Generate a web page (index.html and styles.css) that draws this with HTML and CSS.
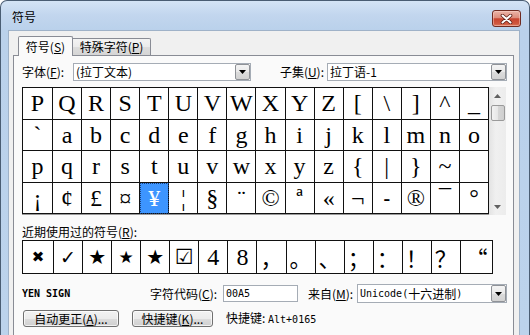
FILE: index.html
```html
<!DOCTYPE html>
<html lang="zh-CN">
<head>
<meta charset="utf-8">
<title>符号</title>
<link rel="stylesheet" href="styles.css">
</head>
<body>
<div class="window">
  <div class="titlebar">
    <span class="title">符号</span>
    <div class="close">
      <svg width="13" height="10" viewBox="0 0 13 10">
        <path d="M2.5 1.5 L10.5 8.5 M10.5 1.5 L2.5 8.5" stroke="#5a1d16" stroke-width="3.6" stroke-linecap="round"/>
        <path d="M2.5 1.5 L10.5 8.5 M10.5 1.5 L2.5 8.5" stroke="#ffffff" stroke-width="2" stroke-linecap="round"/>
      </svg>
    </div>
  </div>
  <div class="client">
    <div class="tabs">
      <div class="tab tab-active">符号(<u>S</u>)</div>
      <div class="tab tab-inactive">特殊字符(<u>P</u>)</div>
    </div>
    <div class="panel">
      <div class="row row-font">
        <span class="lbl lbl-font">字体(<u>F</u>):</span>
        <div class="combo combo-font"><span class="combo-text">(拉丁文本)</span><span class="drop"><svg width="7" height="4" viewBox="0 0 7 4"><polygon points="0,0 7,0 3.5,4" fill="#000"/></svg></span></div>
        <span class="lbl lbl-subset">子集(<u>U</u>):</span>
        <div class="combo combo-subset"><span class="combo-text">拉丁语-1</span><span class="drop"><svg width="7" height="4" viewBox="0 0 7 4"><polygon points="0,0 7,0 3.5,4" fill="#000"/></svg></span></div>
      </div>

      <div class="charbox">
        <div class="chargrid">
          <div class="cell">P</div><div class="cell">Q</div><div class="cell">R</div><div class="cell">S</div>
          <div class="cell">T</div><div class="cell">U</div><div class="cell">V</div><div class="cell">W</div>
          <div class="cell">X</div><div class="cell">Y</div><div class="cell">Z</div><div class="cell">[</div>
          <div class="cell">\</div><div class="cell">]</div><div class="cell">^</div><div class="cell">_</div>

          <div class="cell">`</div><div class="cell">a</div><div class="cell">b</div><div class="cell">c</div>
          <div class="cell">d</div><div class="cell">e</div><div class="cell">f</div><div class="cell">g</div>
          <div class="cell">h</div><div class="cell">i</div><div class="cell">j</div><div class="cell">k</div>
          <div class="cell">l</div><div class="cell">m</div><div class="cell">n</div><div class="cell">o</div>

          <div class="cell">p</div><div class="cell">q</div><div class="cell">r</div><div class="cell">s</div>
          <div class="cell">t</div><div class="cell">u</div><div class="cell">v</div><div class="cell">w</div>
          <div class="cell">x</div><div class="cell">y</div><div class="cell">z</div><div class="cell">{</div>
          <div class="cell">|</div><div class="cell">}</div><div class="cell">~</div><div class="cell"></div>

          <div class="cell">¡</div><div class="cell">¢</div><div class="cell">£</div><div class="cell">¤</div>
          <div class="cell cell-selected">¥</div><div class="cell">¦</div><div class="cell">§</div><div class="cell">¨</div>
          <div class="cell">©</div><div class="cell">ª</div><div class="cell">«</div><div class="cell">¬</div>
          <div class="cell cell-shy">-</div><div class="cell">®</div><div class="cell">¯</div><div class="cell">°</div>
        </div>
        <div class="scrollbar">
          <div class="sb-btn"><svg width="7" height="4" viewBox="0 0 7 4"><polygon points="0,4 7,4 3.5,0" fill="#606060"/></svg></div>
          <div class="sb-thumb"></div>
          <div class="sb-track"></div>
          <div class="sb-btn"><svg width="7" height="4" viewBox="0 0 7 4"><polygon points="0,0 7,0 3.5,4" fill="#606060"/></svg></div>
        </div>
      </div>

      <div class="recent-label">近期使用过的符号(<u>R</u>):</div>
      <div class="recent">
        <div class="rcell r-x">✖</div>
        <div class="rcell r-check">✓</div>
        <div class="rcell r-star">★</div>
        <div class="rcell r-star2">★</div>
        <div class="rcell r-star">★</div>
        <div class="rcell r-box">☑</div>
        <div class="rcell r-serif">4</div>
        <div class="rcell r-serif">8</div>
        <div class="rcell r-cjk">，</div>
        <div class="rcell r-cjk">。</div>
        <div class="rcell r-cjk">、</div>
        <div class="rcell r-cjk">；</div>
        <div class="rcell r-cjk">：</div>
        <div class="rcell r-cjk">！</div>
        <div class="rcell r-cjk">？</div>
        <div class="rcell r-cjk">“</div>
      </div>

      <div class="row row-code">
        <span class="charname mono">YEN SIGN</span>
        <span class="lbl lbl-code">字符代码(<u>C</u>):</span>
        <div class="input"><span class="mono">00A5</span></div>
        <span class="lbl lbl-from">来自(<u>M</u>):</span>
        <div class="combo combo-from"><span class="combo-text"><span class="mono">Unicode(</span>十六进制<span class="mono">)</span></span><span class="drop"><svg width="7" height="4" viewBox="0 0 7 4"><polygon points="0,0 7,0 3.5,4" fill="#000"/></svg></span></div>
      </div>

      <div class="row row-buttons">
        <div class="btn btn-auto">自动更正(<u>A</u>)...</div>
        <div class="btn btn-key">快捷键(<u>K</u>)...</div>
        <span class="shortcut">快捷键: <span class="mono">Alt+0165</span></span>
      </div>
    </div>
  </div>
</div>
</body>
</html>
```

FILE: styles.css
```css
* { box-sizing: border-box; }

html, body {
  margin: 0;
  padding: 0;
}

body {
  width: 530px;
  height: 335px;
  overflow: hidden;
  background: #ffffff;
  font-family: "Noto Sans CJK SC", "DejaVu Sans", sans-serif;
  font-size: 12px;
  color: #000;
}

u {
  text-decoration: underline;
  text-underline-offset: 1px;
}

.mono {
  font-family: "DejaVu Sans Mono", "Liberation Mono", monospace;
  font-size: 10px;
}

/* ---------- window frame ---------- */
.window {
  width: 530px;
  height: 335px;
  border: 1px solid #4a5d73;
  border-bottom: 0;
  border-radius: 7px 7px 0 0;
  background: linear-gradient(#d4e4f5 0px, #c2d6ee 14px, #bad1eb 29px, #bcd3ec 100%);
  display: flex;
  flex-direction: column;
  overflow: hidden;
}

.titlebar {
  height: 29px;
  flex: none;
  display: flex;
  align-items: flex-start;
}

.title {
  margin: 9px 0 0 11px;
  line-height: 14px;
  font-size: 12px;
  color: #000;
}

.close {
  margin: 9px 8px 0 auto;
  width: 29px;
  height: 17px;
  border: 1px solid #6f2b22;
  border-radius: 3px;
  background: linear-gradient(#eab4a8 0%, #de8d7c 45%, #c8442f 52%, #cf5840 85%, #dc7a5e 100%);
  box-shadow: inset 0 0 0 1px rgba(255, 220, 210, 0.45);
  display: flex;
  align-items: center;
  justify-content: center;
}

.close svg { display: block; }

/* ---------- client ---------- */
.client {
  flex: 1;
  margin: 0 9px 0 7px;
  border: 1px solid #9fb2c8;
  border-bottom: 0;
  background: #f0f0f0;
  display: flex;
  flex-direction: column;
  min-height: 0;
}

.tabs {
  flex: none;
  height: 24px;
  padding-left: 9px;
  display: flex;
  align-items: flex-end;
}

.tab {
  border: 1px solid #898c95;
  border-bottom: 0;
  display: flex;
  align-items: center;
  justify-content: center;
  line-height: 14px;
  white-space: nowrap;
}

.tab-active {
  width: 55px;
  height: 20px;
  margin-bottom: -1px;
  background: #fafafa;
  position: relative;
  z-index: 1;
  border-radius: 2px 2px 0 0;
}

.tab-inactive {
  width: 78px;
  height: 17px;
  border-left: 0;
  background: linear-gradient(#f3f3f3 0%, #ebebeb 50%, #dddddd 51%, #d5d5d5 100%);
  border-radius: 0 2px 0 0;
}

.panel {
  flex: 1;
  margin: 0 5px 0 4px;
  border: 1px solid #898c95;
  border-bottom: 0;
  background: #fafafa;
  padding: 7px 6px 0 8px;
  display: flex;
  flex-direction: column;
}

.row {
  display: flex;
  align-items: center;
  flex: none;
}

.lbl {
  line-height: 14px;
  white-space: nowrap;
}

/* ---------- font row ---------- */
.row-font { height: 18px; }

.lbl-font { width: 51px; }

.lbl-subset {
  flex: 1;
  text-align: right;
  padding-right: 3px;
}

.combo {
  height: 100%;
  border: 1px solid #a5acb5;
  background: #fff;
  display: flex;
  align-items: stretch;
}

.combo-text {
  padding-left: 2px;
  line-height: 14px;
  display: flex;
  align-items: center;
  white-space: nowrap;
}

.combo-font { width: 178px; }
.combo-subset { width: 180px; }

.drop {
  width: 15px;
  margin-left: auto;
  border: 1px solid #8f9297;
  border-radius: 2px;
  background: linear-gradient(#f4f4f4 0%, #e9e9e9 50%, #dcdcdc 51%, #d2d2d2 100%);
  display: flex;
  align-items: center;
  justify-content: center;
}

.drop svg { display: block; }

/* ---------- character grid ---------- */
.charbox {
  margin-top: 6px;
  height: 128px;
  display: flex;
  flex: none;
}

.chargrid {
  width: 467px;
  height: 127px;
  border-top: 1px solid #111;
  border-left: 1px solid #111;
  display: grid;
  grid-template-columns: 30px repeat(15, 1fr);
  grid-template-rows: repeat(4, 1fr);
  background: #fff;
  box-shadow: 0 1px 0 #9a9a9a;
}

.cell {
  border-right: 1px solid #111;
  border-bottom: 1px solid #111;
  display: flex;
  align-items: center;
  justify-content: center;
  font-family: "Liberation Serif", "DejaVu Serif", serif;
  font-size: 24px;
  line-height: 1;
  background: #fff;
  color: #000;
}

.cell-selected {
  background: #3d95ff;
  color: #fff;
  outline: 1px dotted #163e7a;
  outline-offset: -1px;
}

.cell-shy {
  font-weight: bold;
  font-size: 20px;
}

.scrollbar {
  width: 17px;
  height: 128px;
  background: linear-gradient(90deg, #e3e3e3, #f0f0f0 40%, #ececec);
  display: flex;
  flex-direction: column;
}

.sb-btn {
  height: 17px;
  display: flex;
  align-items: center;
  justify-content: center;
}

.sb-btn svg { display: block; }

.sb-thumb {
  height: 16px;
  margin: 1px 1px 0 2px;
  border: 1px solid #9a9a9a;
  border-radius: 2px;
  background: linear-gradient(90deg, #f2f2f2 0%, #e6e6e6 50%, #d6d6d6 51%, #cfcfcf 100%);
}

.sb-track { flex: 1; }

/* ---------- recent ---------- */
.recent-label {
  margin-top: 10px;
  line-height: 14px;
  flex: none;
}

.recent {
  margin-top: 1px;
  width: 471px;
  height: 34px;
  flex: none;
  border: 1px solid #111;
  border-right: 0;
  display: grid;
  grid-template-columns: 31px repeat(14, 29.07px) 1fr;
  background: #fff;
}

.rcell {
  border-right: 1px solid #111;
  display: flex;
  align-items: center;
  justify-content: center;
  line-height: 1;
}

.r-x {
  font-family: "DejaVu Sans", sans-serif;
  font-size: 15px;
}

.r-check {
  font-family: "DejaVu Sans", sans-serif;
  font-size: 19px;
}

.r-star {
  font-family: "DejaVu Sans", sans-serif;
  font-size: 20px;
}

.r-star2 {
  font-family: "DejaVu Sans", sans-serif;
  font-size: 17px;
}

.r-box {
  font-family: "DejaVu Sans", sans-serif;
  font-size: 21px;
}

.r-serif {
  font-family: "Liberation Serif", serif;
  font-size: 24px;
}

.r-cjk {
  font-family: "Noto Sans CJK SC", sans-serif;
  font-size: 22px;
}

/* ---------- code row ---------- */
.row-code {
  margin-top: 10px;
  height: 19px;
}

.charname {
  width: 128px;
  line-height: 14px;
  font-weight: bold;
}

.lbl-code { width: 73px; }

.input {
  width: 75px;
  height: 17px;
  border: 1px solid #a5acb5;
  background: #fff;
  padding-left: 2px;
  display: flex;
  align-items: center;
}

.lbl-from {
  margin-left: 10px;
  width: 49px;
}

.combo-from { width: 150px; }

/* ---------- buttons ---------- */
.row-buttons {
  margin-top: 7px;
  height: 17px;
}

.btn {
  height: 17px;
  border: 1px solid #707070;
  border-radius: 3px;
  background: linear-gradient(#f2f2f2 0%, #ebebeb 50%, #dddddd 51%, #cfcfcf 100%);
  box-shadow: inset 0 0 0 1px rgba(255, 255, 255, 0.7);
  display: flex;
  align-items: center;
  justify-content: center;
  line-height: 14px;
  white-space: nowrap;
}

.btn-auto {
  margin-left: 1px;
  width: 96px;
}

.btn-key {
  margin-left: 13px;
  width: 81px;
}

.shortcut {
  margin-left: 13px;
  line-height: 14px;
  white-space: nowrap;
}
```
